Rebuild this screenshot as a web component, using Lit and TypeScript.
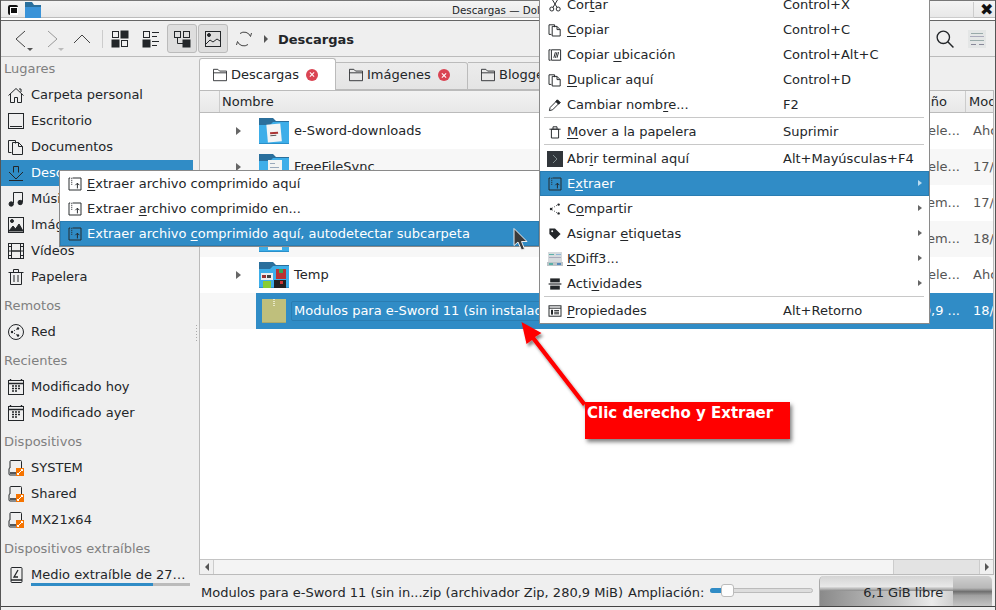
import { LitElement, html, css, svg } from "lit";
import { customElement } from "lit/decorators.js";

const st = (inner: any, size = 16, vb = "0 0 16 16", sw = 1) => html`<svg class="ic" width=${size} height=${size} viewBox=${vb} fill="none" stroke="#232629" stroke-width=${sw}>${inner}</svg>`;
const mic = (inner: any) => st(inner, 16, "-2 -2 20 20", 1.2);

const I: Record<string, any> = {
  home: svg`<path d="M.5 8.500 8 1.500l7.500 7M2.500 7v8.500h4v-5h3v5h4V7"/><path d="M11 2h2v3"/>`,
  desktop: svg`<rect x=".5" y=".5" width="15" height="15"/><path d="M2 13.500h12"/>`,
  docs: svg`<path d="M.5 1.500h7v3M3.500 13.500h-3v-12"/><path d="M4.500 3.500h6l4 4v8h-10zM10.500 3.500v4h4"/>`,
  down: svg`<path d="M5.500 1.500h5v6M5.500 1.500v6M1 7l7 7 7-7M1 15.500h14"/>`,
  music: svg`<path d="M5.500 12V1.500h9V11"/><circle cx="3.200" cy="13" r="2.200" fill="#232629"/><circle cx="12.200" cy="11.500" r="2.200" fill="#232629"/>`,
  pic: svg`<rect x=".5" y=".5" width="15" height="15"/><circle cx="4" cy="4" r="1.500" fill="#232629"/><path d="M1 14l4-5 2.500 3L11 7l4 7z" fill="#232629"/>`,
  video: svg`<rect x=".5" y=".5" width="15" height="15"/><path d="M3.500 0v16M12.500 0v16M0 8h16M0 3.500h3M0 12.500h3M13 3.500h3M13 12.500h3M4 8h8"/>`,
  trash: svg`<path d="M2.500 3.500h11v12h-11zM.5 3.500h15M5.500 3V.5h5V3M6 6v7M10 6v7"/>`,
  net: svg`<circle cx="8" cy="8" r="7.500"/><circle cx="4" cy="8" r="1.200" fill="#232629" stroke="none"/><circle cx="10" cy="4.500" r="1.200" fill="#232629" stroke="none"/><circle cx="10" cy="11.500" r="1.200" fill="#232629" stroke="none"/><path d="M4 8l6-3.500M4 8l6 3.500" stroke-dasharray="1 1.500"/>`,
  cal: svg`<rect x=".5" y="1.500" width="15" height="14"/><path d="M.5 4.500h15M2.500 0v2M13.500 0v2" stroke-width="1.400"/><path d="M4 7h2M7 7h2M10 7h2M4 9.500h2M7 9.500h2M10 9.500h2M4 12h2M7 12h2" stroke-width="1.400"/>`,
  drive: svg`<path d="M3 .5h9.500a1 1 0 0 1 1 1v10M3 .5a1 1 0 0 0-1 1V8M2 8a1 1 0 0 0-1 1v5a1 1 0 0 0 1 1h7"/><path d="M2 13h6" stroke-width="1.500"/><rect x="8" y="8" width="8" height="8" fill="#f67400" stroke="none"/><path d="M9.500 14.500l5-5M11 14.500H9.500V13M13 9.500h1.500V11" stroke="#fff"/>`,
  usb: svg`<path d="M3 1.500a1 1 0 0 1 1-1h9a1 1 0 0 1 1 1v13a1 1 0 0 1-1 1H4a1 1 0 0 1-1-1z"/><path d="M3 13h11" stroke-width="1.500"/><path d="M10 3L6 10h4" stroke-width="1.300"/>`,
  fold: svg`<path d="M.5 14.500v-13h5l2 2h8v11zM.5 5.500h15"/>`,
  cut: svg`<circle cx="4" cy="13" r="2.500"/><circle cx="12" cy="13" r="2.500"/><path d="M5.500 11L11.500 1M10.500 11L4.500 1"/>`,
  copy: svg`<path d="M.5 1.500h7v3M3.500 13.500h-3v-12"/><path d="M4.500 3.500h6l4 4v8h-10zM10.500 3.500v4h4"/>`,
  loc: svg`<path d="M2.500 1.500h-2v13h2M15 1.500H3.500v13H15V1.500M6.500 11.500l2-7M8.500 11.500l2-7M10.500 11.500l2-7"/>`,
  ren: svg`<path d="M1 15l1-4 9-9 3 3-9 9zM9.500 3.500l3 3" /><path d="M9 3.500 11 1.500 14.500 5 12.500 7z" fill="#232629"/>`,
  del: svg`<path d="M3.500 4.500h9v11h-9zM1 4.500h14M5.500 4V1.500h5V4"/>`,
  term: svg`<rect width="16" height="16" fill="#31363b" stroke="none"/><path d="M6 4l4 4-4 4" stroke="#7f8c8d"/>`,
  extract: svg`<path d="M5 .5h10.500v15H.5V.5H2"/><path d="M3.500 1h1M3.500 3.500h1M3.500 6h1M3.500 8.500h1" stroke-width="1.400"/><path d="M11 13.500V7M8.500 9.500 11 7l2.500 2.500"/>`,
  share: svg`<circle cx="3" cy="8" r="1.500" fill="#232629" stroke="none"/><circle cx="12.500" cy="2.500" r="1.500" fill="#232629" stroke="none"/><circle cx="12.500" cy="13.500" r="1.500" fill="#232629" stroke="none"/><path d="M4.500 7l6.500-4M4.500 9l6.500 4" stroke-dasharray="1 2"/>`,
  tag: svg`<path d="M1 1h7l7 7-7 7-7-7z" fill="#232629" stroke="none"/><circle cx="4.500" cy="4.500" r="1.200" fill="#fff" stroke="none"/>`,
  act: svg`<rect x="2" y="1" width="12" height="5" fill="#232629" stroke="none"/><rect x="2" y="10" width="12" height="5" fill="#232629" stroke="none"/><path d="M0 8h16" stroke-width="1.500"/>`,
  prop: svg`<rect x=".5" y="1.500" width="15" height="13"/><path d="M.5 4.500h15" /><rect x="3" y="6.500" width="2.500" height="6" fill="#232629" stroke="none"/><path d="M7 7.500h6M7 9.500h6M7 11.500h6"/>`,
};

const kdiff = svg`<rect x="1" y="1" width="14" height="10" fill="#d5dadd" stroke="none"/><rect x="2" y="3" width="5" height="1" fill="#5ab0a8" stroke="none"/><rect x="9" y="3" width="5" height="1" fill="#8fb8d8" stroke="none"/><rect x="2" y="6" width="12" height="1" fill="#aab" stroke="none"/><rect x="0" y="11" width="16" height="4" fill="#bcc4c8" stroke="none"/><rect x="2" y="12" width="4" height="2" fill="#5ab0a8" stroke="none"/><rect x="10" y="12" width="4" height="2" fill="#5588bb" stroke="none"/>`;

type Row = { name: string; thumb: string; size: string; date: string };
const rows: Row[] = [
  { name: "e-Sword-downloads", thumb: "doc", size: "2 ele...", date: "Ahora" },
  { name: "FreeFileSync", thumb: "sync", size: "9 ele...", date: "17/05" },
  { name: "", thumb: "sync", size: "1 em...", date: "17/05" },
  { name: "", thumb: "sync", size: "1 em...", date: "18/05" },
  { name: "Temp", thumb: "grid", size: "4 ele...", date: "Ahora" },
];

const folder = (t: string) => html`<svg class="fi" width="30" height="30" viewBox="0 0 30 30">
  <path d="M0 2h14l3 3h13v9H0z" fill="#2a6f9c"/>
  <path d="M0 9h11l3-3h16v22H0z" fill="#3daee9"/>
  <rect y="27" width="30" height="1" fill="#2a8fc9"/>
  ${t === "doc" ? svg`<g transform="rotate(-5 15 16)"><rect x="8" y="8" width="14" height="18" fill="#f4f4f4"/><rect x="11" y="16" width="8" height="2" fill="#a33"/><rect x="11" y="19" width="6" height="1" fill="#555"/></g>` : ""}
  ${t === "sync" ? svg`<rect x="9" y="8" width="14" height="18" fill="#f2f4f2"/><rect x="11" y="11" width="5" height="1" fill="#9ab"/><rect x="11" y="15" width="9" height="1" fill="#9ab"/><rect x="12" y="20" width="8" height="3" fill="#8c8"/>` : ""}
  ${t === "grid" ? svg`<rect x="2" y="13" width="12" height="7" fill="#eee"/><rect x="3" y="15" width="4" height="3" fill="#933"/><rect x="8" y="15" width="4" height="3" fill="#444"/><rect x="17" y="9" width="10" height="10" fill="#b33"/><rect x="20" y="9" width="4" height="4" fill="#3a5"/><rect x="4" y="21" width="8" height="7" fill="#8c3"/><rect x="15" y="20" width="12" height="8" fill="#222"/><rect x="21" y="21" width="3" height="3" fill="#c33"/>` : ""}
</svg>`;

@customElement("app-root")
export class AppRoot extends LitElement {
  static styles = css`
    :host { display: block; width: 996px; height: 610px; }
    * { box-sizing: border-box; }
    .win { position: relative; width: 996px; height: 610px; overflow: hidden; background: #efefef; color: #232629;
      font: 13px/16px "DejaVu Sans", sans-serif; display: flex; flex-direction: column;
      border-left: 1px solid #555; border-right: 1px solid #555; }
    u { text-decoration-thickness: 1px; text-underline-offset: 2px; }
    .ic, .fi { flex: none; display: block; }

    .title { height: 21px; flex: none; display: flex; align-items: center; padding: 1px 0 3px 7px; gap: 7px;
      background: linear-gradient(#f4f4f4, #e6e6e6); border-top: 1px solid #777; border-bottom: 1px solid #666;
      box-shadow: inset 0 -2px 0 #fff, inset 0 -3px 0 #bbb; position: relative; }
    .ttext { position: absolute; left: 451px; top: 1px; font-size: 10.300px; }
    .tbtn { width: 10px; height: 10px; background: #111; border-radius: 2px; position: relative; }
    .tbtn::after { content: ""; position: absolute; left: 2px; top: 2px; width: 6px; height: 5px; border: 1px solid #fff; border-width: 1px 1px 2px; }
    .tclose { position: absolute; left: 979px; top: 0; font: bold 16px/18px "DejaVu Sans", sans-serif; color: #111; }
    .tframe { position: absolute; left: 925px; width: 48px; top: 1px; height: 16px; border-right: 1px solid #ccc; border-bottom: 1px solid #ccc; }

    .tools { height: 36px; flex: none; background: #efefef; border-bottom: 1px solid #bbb; display: flex; align-items: center; padding-left: 14px; position: relative; }
    .tools .ic { overflow: visible; }
    .w { display: flex; align-items: center; position: relative; }
    .wb { width: 32px; }
    .wf { width: 27px; }
    .wu { width: 28px; }
    .wg { width: 31px; }
    .wd { width: 24px; }
    .wr { width: 24px; margin-left: 8px; }
    .tri { position: absolute; left: 12px; top: 17px; width: 0; height: 0; border: 3px solid transparent; border-top: 3px solid #555; border-bottom: 0; }
    .tri.off { left: 11px; border-top-color: #bbb; }
    .vsep { width: 1px; height: 18px; background: #ccc; margin: 0 9px 0 0; }
    .tb { width: 30px; height: 29px; border: 1px solid #bbb; border-radius: 3px; background: #dedede; display: flex; align-items: center; justify-content: center; margin-right: 1px; }
    .tb.last { margin-right: 0; }
    .crumb { font-weight: bold; margin-left: 10px; margin-top: 2px; }
    .carrow { width: 0; height: 0; border: 4px solid transparent; border-left: 4px solid #555; border-right: 0; margin-left: 4px; }
    .tright { margin-left: auto; display: flex; gap: 14px; align-items: center; padding-right: 9px; }

    .body { flex: 1; display: flex; min-height: 0; padding-top: 1px; }
    .side { width: 198px; flex: none; padding-right: 6px; position: relative; }
    .lab { height: 24px; margin-top: 5px; padding: 3px 0 5px 3px; color: #7f8080; line-height: 16px; }
    .lab.first { margin-top: 0; }
    .it { height: 26px; display: flex; align-items: center; gap: 7px; padding-left: 7px; position: relative; }
    .it.sel { background: #308cc6; color: #fff; }
    .usage { position: absolute; left: 30px; right: 3px; top: 21px; height: 3px; background: #bbb; }
    .usage i { display: block; width: 122px; height: 3px; background: #308cc6; }
    .grip { position: absolute; right: 2px; top: 267px; width: 1px; height: 16px; background-image: linear-gradient(#aaa 50%, transparent 50%); background-size: 1px 3px; }

    .main { flex: 1; min-width: 0; display: flex; flex-direction: column; }
    .tabs { height: 32px; flex: none; display: flex; align-items: flex-end; }
    .tab { height: 28px; display: flex; align-items: center; gap: 4px; padding: 0 0 2px 13px; background: linear-gradient(#ececec, #e4e4e4); border: 1px solid #bbb; border-left: 0; border-radius: 0 3px 0 0; flex: none; }
    .tab.on { height: 32px; padding-bottom: 0; background: #fff; border-left: 1px solid #bbb; border-bottom: 0; border-radius: 3px 3px 0 0; width: 137px; position: relative; }
    .t2 { width: 132px; }
    .t3 { width: 120px; }
    .x { width: 12px; height: 12px; border-radius: 50%; background: #da4453; margin-left: 3px; position: relative; flex: none; }
    .x::before { content: ""; position: absolute; left: 3px; top: 5.500px; width: 6px; height: 1px; background: #fff; transform: rotate(45deg); }
    .x::after { content: ""; position: absolute; left: 3px; top: 5.500px; width: 6px; height: 1px; background: #fff; transform: rotate(-45deg); }
    .pane { flex: 1; min-height: 0; background: #fff; border: 1px solid #bbb; display: flex; flex-direction: column; margin-right: 1px; }
    .head { height: 22px; flex: none; display: flex; background: linear-gradient(#f2f2f2, #e8e8e8); border-bottom: 1px solid #bbb; line-height: 21px; }
    .head div { border-right: 1px solid #ccc; overflow: hidden; white-space: nowrap; }
    .h0 { width: 20px; }
    .h1 { flex: 1; padding-left: 2px; }
    .h2 { width: 80px; text-align: right; padding-right: 18px; }
    .h3 { width: 27px; padding-left: 3px; border-right: 0 !important; }
    .list { flex: 1; min-height: 0; }
    .row { height: 36px; display: flex; align-items: center; background: #fff; }
    .row.alt { background: #f7f7f7; }
    .arrow { width: 0; height: 0; border: 4px solid transparent; border-left: 5px solid #666; border-right: 0; margin-left: 36px; margin-right: 18px; flex: none; }
    .name { flex: 1; padding-left: 5px; white-space: nowrap; overflow: hidden; }
    .size { width: 80px; text-align: right; padding-right: 6px; flex: none; color: #555; white-space: nowrap; }
    .date { width: 27px; padding-left: 7px; flex: none; overflow: hidden; white-space: nowrap; color: #555; }
    .selrow { height: 36px; display: flex; align-items: center; background: #f7f7f7; padding-left: 56px; }
    .selin { flex: 1; height: 36px; background: #308cc6; color: #fff; display: flex; align-items: center; padding-left: 6px; }
    .zip { width: 24px; height: 24px; background: #bfbf7c; border-bottom: 1px solid #a9a96c; position: relative; flex: none; }
    .zip::after { content: ""; position: absolute; left: 11px; top: 0; width: 2px; height: 8px; background-image: linear-gradient(#e8e8c8 50%, transparent 50%); background-size: 2px 2px; }
    .selname { flex: 1; min-width: 0; margin-left: 5px; padding-left: 2px; border: 1px solid #2a7db2; border-radius: 2px; height: 20px; line-height: 18px; white-space: nowrap; overflow: hidden; }
    .selrow .size, .selrow .date { color: #fff; }
    .sb { height: 15px; flex: none; display: flex; border-top: 1px solid #c4c4c4; background: #e3e3e3; }
    .sbb { width: 14px; background: #f0f0f0; border-right: 1px solid #ccc; display: flex; align-items: center; justify-content: center; flex: none; }
    .sbb.r { border-right: 0; border-left: 1px solid #ccc; }
    .sbt { flex: 1; background: #f4f4f4; }
    .sbe { width: 86px; background: #e3e3e3; border-left: 1px solid #ccc; }
    .la { width: 0; height: 0; border: 4px solid transparent; border-right: 4px solid #555; border-left: 0; }
    .ra { width: 0; height: 0; border: 4px solid transparent; border-left: 4px solid #555; border-right: 0; }

    .status { height: 31px; flex: none; display: flex; align-items: center; padding-left: 2px; gap: 6px; white-space: nowrap; }
    .status .lbl { margin-top: 4px; }
    .status .zoomlbl { margin-left: -1px; }
    .slider { width: 103px; height: 5px; background: #ddd; border: 1px solid #bbb; border-radius: 3px; position: relative; }
    .slider i { position: absolute; left: -1px; top: -1px; width: 14px; height: 5px; background: #308cc6; border-radius: 3px; }
    .slider b { position: absolute; left: 10px; top: -5px; width: 13px; height: 13px; background: #fdfdfd; border: 1px solid #bbb; border-radius: 3px; }
    .free { width: 173px; height: 30px; border-radius: 5px 5px 0 0; display: flex; align-items: center; justify-content: flex-end; padding-right: 49px; border-left: 1px solid #aaa;
      background: linear-gradient(90deg, #8a8a8a, #c6c6c6 45%, #eaeaea 65%, #9c9c9c) 0 100% / 100% 50% no-repeat, #dcdcdc; position: relative; color: #232629; overflow: hidden; }
    .free::after { content: ""; position: absolute; left: 133px; right: 0; top: 0; bottom: 0; background: linear-gradient(#d0d0d0, #b8b8b8 40%, #6f6f6f 52%, #a0a0a0 65%, #c4c4c4); }
    .free::before { content: ""; position: absolute; left: 0; width: 133px; top: 0; height: 15px; background: linear-gradient(#d4d4d4, #e8e8e8 70%, #8a8a8a); }
    .free span { position: relative; z-index: 1; margin-top: 4px; }
    .foot { height: 4px; flex: none; border-top: 1px solid #444; background: #efefef; }

    .menu { position: absolute; background: #fff; border: 1px solid #8a8a8a; z-index: 2; }
    .main-menu { left: 538px; top: -9px; width: 391px; height: 333px; }
    .sub { left: 58px; top: 170px; width: 481px; height: 77px; z-index: 3; }
    .mi { height: 25px; display: flex; align-items: center; padding-left: 7px; position: relative; white-space: nowrap; }
    .mi.on { background: #308cc6; color: #fff; box-shadow: inset 0 0 0 1px #2a7db2; }
    .mi .ic { margin-right: 4px; }
    .mi .mt { width: 216px; }
    .sep { height: 2px; border-top: 1px solid #c8c8c8; margin: 0 5px 0 4px; }
    .sm { position: absolute; right: 7px; top: 9px; width: 0; height: 0; border: 3.500px solid transparent; border-left: 4px solid #666; border-right: 0; }
    .mi.on .sm { border-left-color: #bcdcf0; }

    .overlay { position: absolute; left: -1px; top: 0; z-index: 4; pointer-events: none; overflow: visible; }
    .note { position: absolute; left: 584px; top: 402px; width: 205px; height: 37px; background: #f00; color: #fff; font-weight: bold; font-size: 15px; padding: 3px 2px; line-height: 16px; box-shadow: 2px 3px 4px rgba(0,0,0,.5); z-index: 4; white-space: nowrap; }
  `;

  private item(icon: string, label: string, extra = "") {
    return html`<div class="it ${extra}">${st(I[icon])}<span>${label}</span></div>`;
  }

  private mi(icon: any, label: any, sc = "", sub = false, on = false) {
    return html`<div class="mi ${on ? "on" : ""}">${icon}<span class="mt">${label}</span><span>${sc}</span>${sub ? html`<i class="sm"></i>` : ""}</div>`;
  }

  render() {
    return html`<div class="win">
      <div class="title">
        <div class="tbtn"></div>
        <svg class="ic" width="16" height="16" viewBox="0 0 16 16"><path d="M0 0h7l2 3h7v3H0z" fill="#2a6f9c"/><path d="M0 5h16v11H0z" fill="#3a93d8"/></svg>
        <span class="ttext">Descargas — Dolphin</span>
        <div class="tframe"></div>
        <span class="tclose">✖</span>
      </div>

      <div class="tools">
        <div class="w wb">${st(svg`<path d="M10 0 1 8l9 8" stroke="#444"/>`)}<i class="tri"></i></div>
        <div class="w wf">${st(svg`<path d="M1 0l9 8-9 8" stroke="#999"/>`)}<i class="tri off"></i></div>
        <div class="w wu">${st(svg`<path d="M0 12l8-8 8 8" stroke="#444"/>`)}</div>
        <div class="vsep"></div>
        <div class="w wg">${st(svg`<rect x=".5" y=".5" width="6" height="6"/><rect x="9" y="0" width="7" height="7" fill="#232629"/><rect x="0" y="9" width="7" height="7" fill="#232629"/><rect x="9.500" y="9.500" width="6" height="6"/>`)}</div>
        <div class="w wd">${st(svg`<rect x=".5" y=".5" width="6" height="6"/><path d="M9 1.500h7M9 5.500h5M9 10.500h7M9 14.500h5"/><rect x="0" y="9" width="7" height="7" fill="#232629"/>`)}</div>
        <div class="tb">${st(svg`<rect x=".5" y=".5" width="6" height="6"/><rect x="9.500" y=".5" width="6" height="6"/><rect x="9" y="9" width="7" height="7" fill="#232629"/><path d="M3.500 7v5.500H9"/>`)}</div>
        <div class="tb last">${st(svg`<rect x=".5" y=".5" width="15" height="15"/><circle cx="4" cy="4" r="1.500" fill="#232629"/><path d="M1 13l4-4 3 2 4-3 3 2"/>`)}</div>
        <div class="w wr">${st(svg`<path d="M4 2.500a6.800 6.800 0 0 1 10.500 3M12 13.500a6.800 6.800 0 0 1-10.500-3M1.500 10.500l-1 3.500M14.500 5.500l1-3.500" stroke="#444"/>`)}</div>
        <i class="carrow"></i>
        <span class="crumb">Descargas</span>
        <div class="tright">
          ${st(svg`<circle cx="6.500" cy="6.500" r="5.500" stroke-width="1.200"/><path d="M10.500 10.500l5 5" stroke-width="1.300"/>`, 18)}
          <svg width="18" height="18" viewBox="0 0 18 18" class="ic"><rect width="18" height="18" fill="#e4e6e6"/><rect x="3" y="3" width="12" height="1" fill="#9aa"/><rect x="2" y="6" width="14" height="1" fill="#aab"/><rect x="2" y="10" width="14" height="1" fill="#9aa"/><rect x="3" y="14" width="5" height="1" fill="#889"/><rect x="11" y="14" width="5" height="1" fill="#889"/></svg>
        </div>
      </div>

      <div class="body">
        <div class="side">
          <div class="lab first">Lugares</div>
          ${this.item("home", "Carpeta personal")}
          ${this.item("desktop", "Escritorio")}
          ${this.item("docs", "Documentos")}
          ${this.item("down", "Descargas", "sel")}
          ${this.item("music", "Música")}
          ${this.item("pic", "Imágenes")}
          ${this.item("video", "Vídeos")}
          ${this.item("trash", "Papelera")}
          <div class="lab">Remotos</div>
          ${this.item("net", "Red")}
          <div class="lab">Recientes</div>
          ${this.item("cal", "Modificado hoy")}
          ${this.item("cal", "Modificado ayer")}
          <div class="lab">Dispositivos</div>
          ${this.item("drive", "SYSTEM")}
          ${this.item("drive", "Shared")}
          ${this.item("drive", "MX21x64")}
          <div class="lab">Dispositivos extraíbles</div>
          <div class="it">${st(I.usb)}<span>Medio extraíble de 27…</span><div class="usage"><i></i></div></div>
          <div class="grip"></div>
        </div>

        <div class="main">
          <div class="tabs">
            <div class="tab on">${st(I.fold, 14)}<span>Descargas</span><i class="x"></i></div>
            <div class="tab t2">${st(I.fold, 14)}<span>Imágenes</span><i class="x"></i></div>
            <div class="tab t3">${st(I.fold, 14)}<span>Blogger</span></div>
          </div>
          <div class="pane">
            <div class="head"><div class="h0"></div><div class="h1">Nombre</div><div class="h2">Tamaño</div><div class="h3">Modificado</div></div>
            <div class="list">
              ${rows.map((r, i) => html`<div class="row ${i % 2 ? "alt" : ""}">
                <i class="arrow"></i>${folder(r.thumb)}
                <span class="name">${r.name}</span><span class="size">${r.size}</span><span class="date">${r.date}</span>
              </div>`)}
              <div class="selrow"><div class="selin"><div class="zip"></div>
                <span class="selname">Modulos para e-Sword 11 (sin instalador).zip</span><span class="size">280,9 ...</span><span class="date">18/05</span></div></div>
            </div>
            <div class="sb"><div class="sbb"><i class="la"></i></div><div class="sbt"></div><div class="sbe"></div><div class="sbb r"><i class="ra"></i></div></div>
          </div>
          <div class="status">
            <span class="lbl">Modulos para e-Sword 11 (sin in...zip (archivador Zip, 280,9 MiB)</span>
            <span class="lbl zoomlbl">Ampliación:</span>
            <div class="slider"><i></i><b></b></div>
            <div class="free"><span>6,1 GiB libre</span></div>
          </div>
        </div>
      </div>
      <div class="foot"></div>

      <div class="menu main-menu">
        ${this.mi(mic(I.cut), html`Cor<u>t</u>ar`, "Control+X")}
        ${this.mi(mic(I.copy), html`<u>C</u>opiar`, "Control+C")}
        ${this.mi(mic(I.loc), html`Copiar <u>u</u>bicación`, "Control+Alt+C")}
        ${this.mi(mic(I.copy), html`<u>D</u>uplicar aquí`, "Control+D")}
        ${this.mi(mic(I.ren), html`Cambiar nomb<u>r</u>e...`, "F2")}
        <div class="sep"></div>
        ${this.mi(mic(I.del), html`<u>M</u>over a la papelera`, "Suprimir")}
        <div class="sep"></div>
        ${this.mi(st(I.term), html`Abr<u>i</u>r terminal aquí`, "Alt+Mayúsculas+F4")}
        ${this.mi(mic(I.extract), html`E<u>x</u>traer`, "", true, true)}
        ${this.mi(mic(I.share), html`C<u>o</u>mpartir`, "", true)}
        ${this.mi(mic(I.tag), html`Asignar <u>e</u>tiquetas`, "", true)}
        ${this.mi(st(kdiff), html`<u>K</u>Diff3...`, "", true)}
        ${this.mi(mic(I.act), html`Acti<u>v</u>idades`, "", true)}
        <div class="sep"></div>
        ${this.mi(mic(I.prop), html`<u>P</u>ropiedades`, "Alt+Retorno")}
      </div>

      <div class="menu sub">
        ${this.mi(mic(I.extract), html`<u>E</u>xtraer archivo comprimido aquí`)}
        ${this.mi(mic(I.extract), html`Extraer <u>a</u>rchivo comprimido en...`)}
        ${this.mi(mic(I.extract), html`Extraer archivo <u>c</u>omprimido aquí, autodetectar subcarpeta`, "", false, true)}
      </div>

      <svg class="overlay" width="996" height="610" viewBox="0 0 996 610">
        <defs><filter id="ds" x="-20%" y="-20%" width="150%" height="150%"><feDropShadow dx="2" dy="3" stdDeviation="1.500" flood-color="#000" flood-opacity=".45"/></filter></defs>
        <g filter="url(#ds)">
          <path d="M521.500 322 541.500 333 535 337 586 403 583 406 532 340 526.500 344z" fill="#f00"/>
        </g>
        <path d="M514 228.500v17l4-3.500 3.500 8 3-1-3-7.500h5.500z" fill="#3a3a3a" stroke="#eee" stroke-width="1"/>
      </svg>
      <div class="note">Clic derecho y Extraer</div>
    </div>`;
  }
}
